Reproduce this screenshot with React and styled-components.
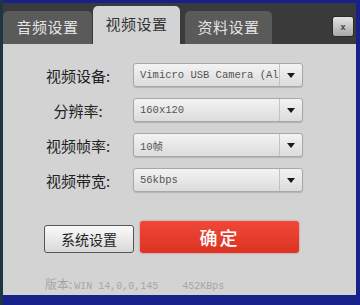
import React from "react";
import styled, { createGlobalStyle } from "styled-components";

const GlobalStyle = createGlobalStyle`
  html, body {
    margin: 0;
    padding: 0;
    background: #16207e;
  }
`;

const CJK = `"Noto Sans CJK SC", "Noto Sans", sans-serif`;

const Window = styled.div`
  width: 360px;
  height: 305px;
  box-sizing: border-box;
  padding: 3px 4px 10px 0;
  background: #17218a;
  border-left: 3px solid #1d3644;
  display: flex;
  flex-direction: column;
  font-family: ${CJK};
`;

const TabBar = styled.div`
  height: 41px;
  flex: none;
  background: #3a3a3a;
  display: flex;
  align-items: flex-end;
  gap: 1px;
  position: relative;
`;

const Tab = styled.div`
  width: ${(p) => p.width}px;
  height: ${(p) => (p.active ? 38 : 33)}px;
  margin-right: ${(p) => p.after || 0}px;
  box-sizing: border-box;
  border-radius: 5px 5px 0 0;
  background: ${(p) => (p.active ? "#d3d3d3" : "#5a5a5a")};
  color: ${(p) => (p.active ? "#333" : "#e4e4e4")};
  font-size: 15px;
  display: flex;
  align-items: center;
  justify-content: center;
  padding-bottom: ${(p) => (p.active ? 4 : 2)}px;
  letter-spacing: 0.5px;
`;

const CloseButton = styled.div`
  position: absolute;
  left: 329px;
  top: 13px;
  width: 22px;
  height: 21px;
  border-radius: 3px;
  background: linear-gradient(#e4e4e4, #a9a9a9);
  border: 1px solid #2a2a2a;
  box-sizing: border-box;
  display: flex;
  align-items: center;
  justify-content: center;
  font-family: "Liberation Sans", sans-serif;
  font-weight: bold;
  font-size: 9px;
  color: #444;
`;

const Body = styled.div`
  flex: 1;
  background: #d3d3d3;
  padding: 19px 0 0 40px;
  display: flex;
  flex-direction: column;
`;

const Form = styled.div`
  display: grid;
  grid-template-columns: 70px 170px;
  column-gap: 20px;
  row-gap: 11px;
  grid-auto-rows: 24px;
`;

const Label = styled.div`
  font-size: 15px;
  color: #222;
  text-align: center;
  align-self: center;
  white-space: nowrap;
  margin-top: ${(p) => p.shift || 0}px;
`;

const Select = styled.div`
  box-sizing: border-box;
  border: 1px solid #a8a8a8;
  border-radius: 3px;
  background: linear-gradient(#f3f3f3, #dcdcdc);
  box-shadow: 0 1px 1px rgba(0, 0, 0, 0.15);
  display: flex;
  align-items: stretch;
`;

const SelectValue = styled.div`
  flex: 1;
  overflow: hidden;
  white-space: nowrap;
  font-family: "Liberation Mono", "Noto Sans CJK SC", monospace;
  font-size: 10.5px;
  color: #555;
  padding-left: 6px;
  display: flex;
  align-items: center;
`;

const Arrow = styled.div`
  width: 22px;
  flex: none;
  border-left: 1px solid #c2c2c2;
  display: flex;
  align-items: center;
  justify-content: center;
  &::after {
    content: "";
    border-left: 4px solid transparent;
    border-right: 4px solid transparent;
    border-top: 5px solid #1a1a1a;
  }
`;

const Actions = styled.div`
  display: flex;
  align-items: flex-end;
  gap: 6px;
  margin-top: 29px;
  margin-left: 1px;
`;

const SystemButton = styled.div`
  width: 90px;
  height: 28px;
  box-sizing: border-box;
  border: 1px solid #555;
  border-radius: 3px;
  background: linear-gradient(#fafafa, #d8d8d8);
  font-size: 14px;
  color: #222;
  display: flex;
  align-items: center;
  justify-content: center;
`;

const ConfirmButton = styled.div`
  width: 159px;
  height: 32px;
  box-sizing: border-box;
  border-radius: 3px;
  background: linear-gradient(#ef4838, #dc3322);
  box-shadow: 0 0 2px rgba(200, 40, 30, 0.6);
  color: #fff;
  font-size: 18px;
  font-weight: 500;
  display: flex;
  align-items: center;
  justify-content: center;
  letter-spacing: 2px;
`;

const Version = styled.div`
  margin-top: 22px;
  margin-left: 2px;
  font-family: "Liberation Mono", monospace;
  font-size: 10px;
  color: #a6a6a6;
  white-space: pre;
  display: flex;
  align-items: baseline;
`;

const VersionLabel = styled.span`
  font-family: ${CJK};
  font-size: 12px;
  margin-right: 2px;
`;

const fields = [
  { label: "视频设备:", value: "Vimicro USB Camera (Al" },
  { label: "分辨率:", value: "160x120" },
  { label: "视频帧率:", value: "10帧", shift: 1 },
  { label: "视频带宽:", value: "56kbps" },
];

export default function App() {
  return (
    <>
      <GlobalStyle />
      <Window>
        <TabBar>
          <Tab width={89}>音频设置</Tab>
          <Tab width={87} active after={4}>
            视频设置
          </Tab>
          <Tab width={87}>资料设置</Tab>
          <CloseButton>x</CloseButton>
        </TabBar>
        <Body>
          <Form>
            {fields.map((f) => (
              <React.Fragment key={f.label}>
                <Label shift={f.shift}>{f.label}</Label>
                <Select>
                  <SelectValue>{f.value}</SelectValue>
                  <Arrow />
                </Select>
              </React.Fragment>
            ))}
          </Form>
          <Actions>
            <SystemButton>系统设置</SystemButton>
            <ConfirmButton>确定</ConfirmButton>
          </Actions>
          <Version>
            <VersionLabel>版本:</VersionLabel>
            {"WIN 14,0,0,145    452KBps"}
          </Version>
        </Body>
      </Window>
    </>
  );
}
